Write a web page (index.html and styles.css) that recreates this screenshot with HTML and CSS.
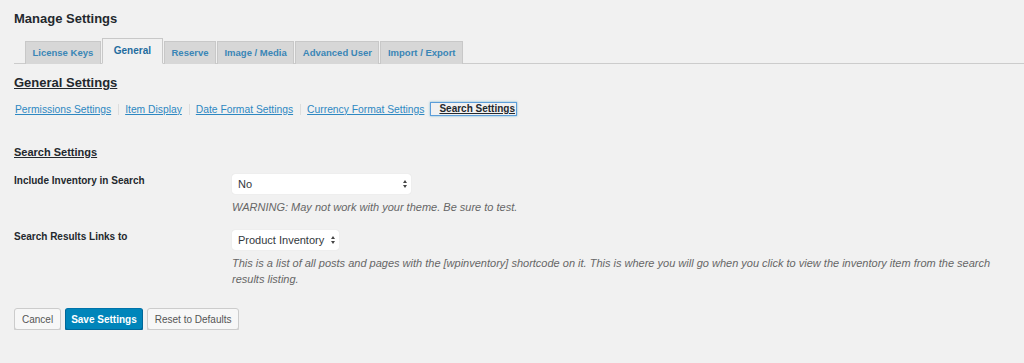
FILE: index.html
```html
<!DOCTYPE html>
<html lang="en">
<head>
    <meta charset="UTF-8">
    <title>Manage Settings</title>
    <link rel="stylesheet" href="styles.css">
</head>
<body>
    <div class="wrap">
        <h1>Manage Settings</h1>

        <div class="tabs">
            <a class="tab" href="#">License Keys</a>
            <a class="tab active" href="#">General</a>
            <a class="tab" href="#">Reserve</a>
            <a class="tab" href="#">Image / Media</a>
            <a class="tab" href="#">Advanced User</a>
            <a class="tab" href="#">Import / Export</a>
        </div>

        <h2>General Settings</h2>

        <div class="subnav">
            <a href="#">Permissions Settings</a>
            <span class="sep"></span>
            <a href="#">Item Display</a>
            <span class="sep"></span>
            <a href="#">Date Format Settings</a>
            <span class="sep"></span>
            <a href="#">Currency Format Settings</a>
            <a class="current" href="#">Search Settings</a>
        </div>

        <h3>Search Settings</h3>

        <div class="row">
            <label class="label">Include Inventory in Search</label>
            <div class="field">
                <div class="select wide">No<span class="arrows"></span></div>
                <p class="desc">WARNING: May not work with your theme. Be sure to test.</p>
            </div>
        </div>

        <div class="row">
            <label class="label">Search Results Links to</label>
            <div class="field">
                <div class="select">Product Inventory<span class="arrows"></span></div>
                <p class="desc">This is a list of all posts and pages with the [wpinventory] shortcode on it. This is where you will go when you click to view the inventory item from the search results listing.</p>
            </div>
        </div>

        <div class="buttons">
            <button class="btn">Cancel</button>
            <button class="btn primary">Save Settings</button>
            <button class="btn">Reset to Defaults</button>
        </div>
    </div>
</body>
</html>
```

FILE: styles.css
```css
body {
    margin: 0;
    background: #f1f1f1;
    font-family: 'Liberation Sans', Arial, sans-serif;
    color: #23282d;
    font-size: 10px;
}

.wrap {
    padding: 11px 0 0 14px;
}

h1 {
    font-size: 13px;
    font-weight: bold;
    margin: 0;
    line-height: 16px;
}

/* Tabs */
.tabs {
    display: flex;
    gap: 1px;
    margin-top: 13px;
    padding-left: 11px;
    border-bottom: 1px solid #ccc;
    height: 23px;
    align-items: flex-end;
}

.tab {
    display: block;
    height: 22px;
    line-height: 22px;
    padding: 0 6.5px;
    background: #d7d7d7;
    border: 1px solid #c8c8c8;
    border-bottom: none;
    color: #3a86b6;
    font-size: 9.5px;
    font-weight: bold;
    text-decoration: none;
    margin-bottom: -1px;
}

.tab.active {
    background: #f1f1f1;
    color: #1f6c9e;
    font-size: 10px;
    padding: 0 11px;
    height: 24px;
    line-height: 24px;
    border-bottom: 1px solid #f1f1f1;
}

h2 {
    font-size: 13px;
    font-weight: bold;
    text-decoration: underline;
    margin: 11px 0 0;
    line-height: 16px;
}

/* Sub navigation */
.subnav {
    display: flex;
    align-items: center;
    margin-top: 10px;
    height: 16px;
    padding-left: 1px;
}

.subnav a {
    color: #2e88c2;
    text-decoration: underline;
    font-size: 10.3px;
}

.sep {
    width: 1px;
    height: 11px;
    background: #ddd;
    margin: 0 6px 0 7px;
}

.subnav a.current {
    margin-left: 6px;
    color: #23282d;
    font-weight: bold;
    font-size: 10px;
    border: 1px solid #5b9dd9;
    box-shadow: 0 0 2px rgba(30, 140, 190, 0.6);
    padding: 0 1px 0 8px;
    line-height: 12px;
}

h3 {
    font-size: 11px;
    font-weight: bold;
    text-decoration: underline;
    margin: 28px 0 0;
    line-height: 14px;
}

/* Form rows */
.row {
    display: flex;
    margin-top: 15px;
}

.label {
    width: 218px;
    flex-shrink: 0;
    font-weight: bold;
    font-size: 10px;
    line-height: 14px;
}

.field {
    flex: 1;
    padding-right: 14px;
}

.select {
    position: relative;
    width: fit-content;
    height: 20px;
    line-height: 20px;
    background: #fff;
    border-radius: 3px;
    padding: 0 15px 0 6px;
    font-size: 11px;
    color: #32373c;
    box-shadow: 0 0 1px rgba(0, 0, 0, 0.15);
}

.select.wide {
    width: 158px;
}

.arrows {
    position: absolute;
    right: 4px;
    top: 6px;
    width: 0;
    height: 0;
    border-left: 2.5px solid transparent;
    border-right: 2.5px solid transparent;
    border-bottom: 3px solid #444;
}

.arrows::after {
    content: "";
    position: absolute;
    left: -2.5px;
    top: 5px;
    border-left: 2.5px solid transparent;
    border-right: 2.5px solid transparent;
    border-top: 3px solid #444;
}

.desc {
    margin: 5px 0 0;
    font-style: italic;
    color: #666;
    font-size: 11px;
    line-height: 16px;
}

/* Buttons */
.buttons {
    display: flex;
    gap: 4px;
    margin-top: 21px;
}

.btn {
    height: 22px;
    padding: 0 7px;
    font-family: inherit;
    font-size: 10px;
    border: 1px solid #ccc;
    border-radius: 3px;
    background: #f7f7f7;
    color: #555;
    box-shadow: 0 1px 0 #ccc;
}

.btn.primary {
    padding: 0 5px;
    background: #0085ba;
    border-color: #0073aa #006799 #006799;
    color: #fff;
    font-weight: bold;
    box-shadow: 0 1px 0 #006799;
}
```
